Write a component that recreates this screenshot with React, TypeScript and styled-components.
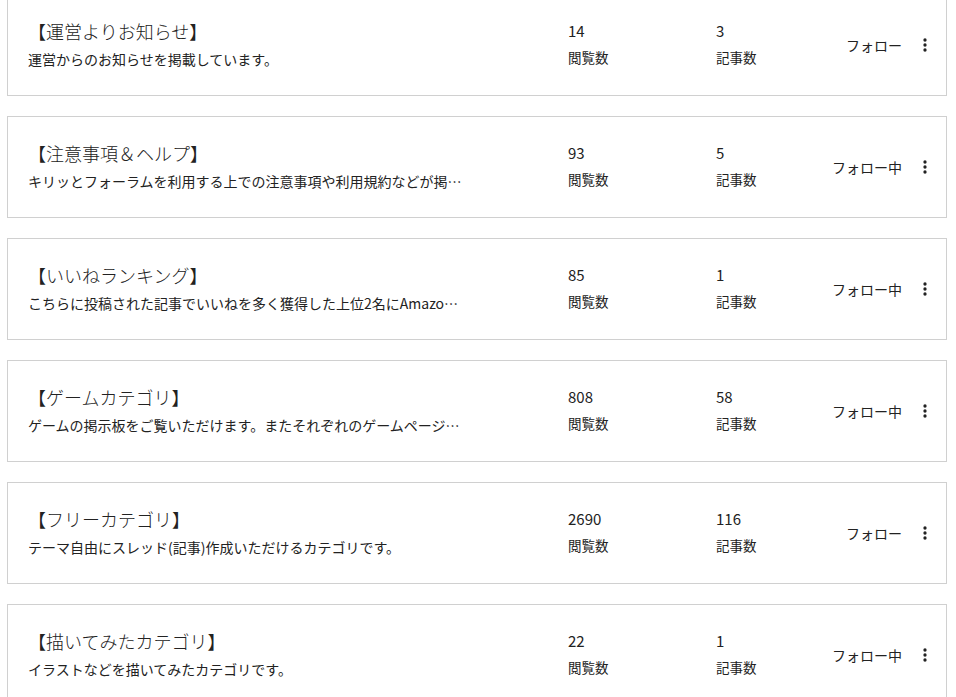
import styled, { createGlobalStyle } from "styled-components"

const GlobalStyle = createGlobalStyle`
  html, body {
    margin: 0;
    padding: 0;
    background: #fff;
    overflow: hidden;
  }
  body {
    font-family: "Noto Sans CJK JP", "Noto Sans", sans-serif;
    color: #222;
  }
  * {
    box-sizing: border-box;
  }
`

const List = styled.ul`
  list-style: none;
  margin: -6px 9px 0 7px; // 少しスクロールした状態
  padding: 0;
  display: flex;
  flex-direction: column;
  gap: 20px;
`
const Card = styled.li`
  height: 102px;
  border: 1px solid #d0d0d0;
  background: #fff;
  display: flex;
  align-items: center;
  padding: 0 11px 4px 20px;
`
const Info = styled.div`
  flex: 0 0 540px;
  min-width: 0;
`
const Title = styled.h2`
  margin: 0;
  font-size: 18px;
  font-weight: 300;
  line-height: 28px;
  white-space: nowrap;
`
const Desc = styled.p`
  margin: 3px 0 0;
  max-width: 436px;
  font-size: 14px;
  line-height: 22px;
  white-space: nowrap;
  overflow: hidden;
  text-overflow: ellipsis;
`
const Stat = styled.div<{ $width?: number }>`
  flex: 0 0 ${props => props.$width ? `${props.$width}px` : "auto"};
`
const StatValue = styled.div`
  font-size: 15px;
  line-height: 24px;
`
const StatLabel = styled.div`
  margin-top: 3px;
  font-size: 13.5px;
  line-height: 22px;
`
const Actions = styled.div`
  margin-left: auto;
  padding-top: 4px;
  flex: 0 0 auto;
  display: flex;
  align-items: center;
  gap: 13px;
`
const FollowButton = styled.button`
  border: 0;
  background: none;
  padding: 0;
  font-family: inherit;
  font-size: 14px;
  color: #222;
  white-space: nowrap;
  cursor: pointer;
`
const MenuButton = styled.button`
  width: 20px;
  height: 20px;
  border: 0;
  background: none;
  padding: 0;
  display: flex;
  align-items: center;
  justify-content: center;
  color: #222;
  cursor: pointer;
`

function MoreIcon() {
  return (
    <svg width="20" height="20" viewBox="0 0 24 24" fill="currentColor">
      <circle cx="12" cy="6" r="2" />
      <circle cx="12" cy="12" r="2" />
      <circle cx="12" cy="18" r="2" />
    </svg>
  )
}

interface ICategory {
  id: number,
  title: string,
  description: string,
  views: number,
  posts: number,
  following: boolean
}

const categories: ICategory[] = [
  { id: 1, title: "【運営よりお知らせ】", description: "運営からのお知らせを掲載しています。", views: 14, posts: 3, following: false },
  { id: 2, title: "【注意事項＆ヘルプ】", description: "キリッとフォーラムを利用する上での注意事項や利用規約などが掲載されています。", views: 93, posts: 5, following: true },
  { id: 3, title: "【いいねランキング】", description: "こちらに投稿された記事でいいねを多く獲得した上位2名にAmazonギフト券をプレゼントします。", views: 85, posts: 1, following: true },
  { id: 4, title: "【ゲームカテゴリ】", description: "ゲームの掲示板をご覧いただけます。またそれぞれのゲームページへ移動できます。", views: 808, posts: 58, following: true },
  { id: 5, title: "【フリーカテゴリ】", description: "テーマ自由にスレッド(記事)作成いただけるカテゴリです。", views: 2690, posts: 116, following: false },
  { id: 6, title: "【描いてみたカテゴリ】", description: "イラストなどを描いてみたカテゴリです。", views: 22, posts: 1, following: true },
]

function App() {
  return (
    <>
      <GlobalStyle />
      <List>
        {categories.map(cat => (
          <Card key={cat.id}>
            <Info>
              <Title>{cat.title}</Title>
              <Desc>{cat.description}</Desc>
            </Info>
            <Stat $width={148}>
              <StatValue>{cat.views}</StatValue>
              <StatLabel>閲覧数</StatLabel>
            </Stat>
            <Stat>
              <StatValue>{cat.posts}</StatValue>
              <StatLabel>記事数</StatLabel>
            </Stat>
            <Actions>
              <FollowButton>{cat.following ? "フォロー中" : "フォロー"}</FollowButton>
              <MenuButton>
                <MoreIcon />
              </MenuButton>
            </Actions>
          </Card>
        ))}
      </List>
    </>
  )
}

export default App
